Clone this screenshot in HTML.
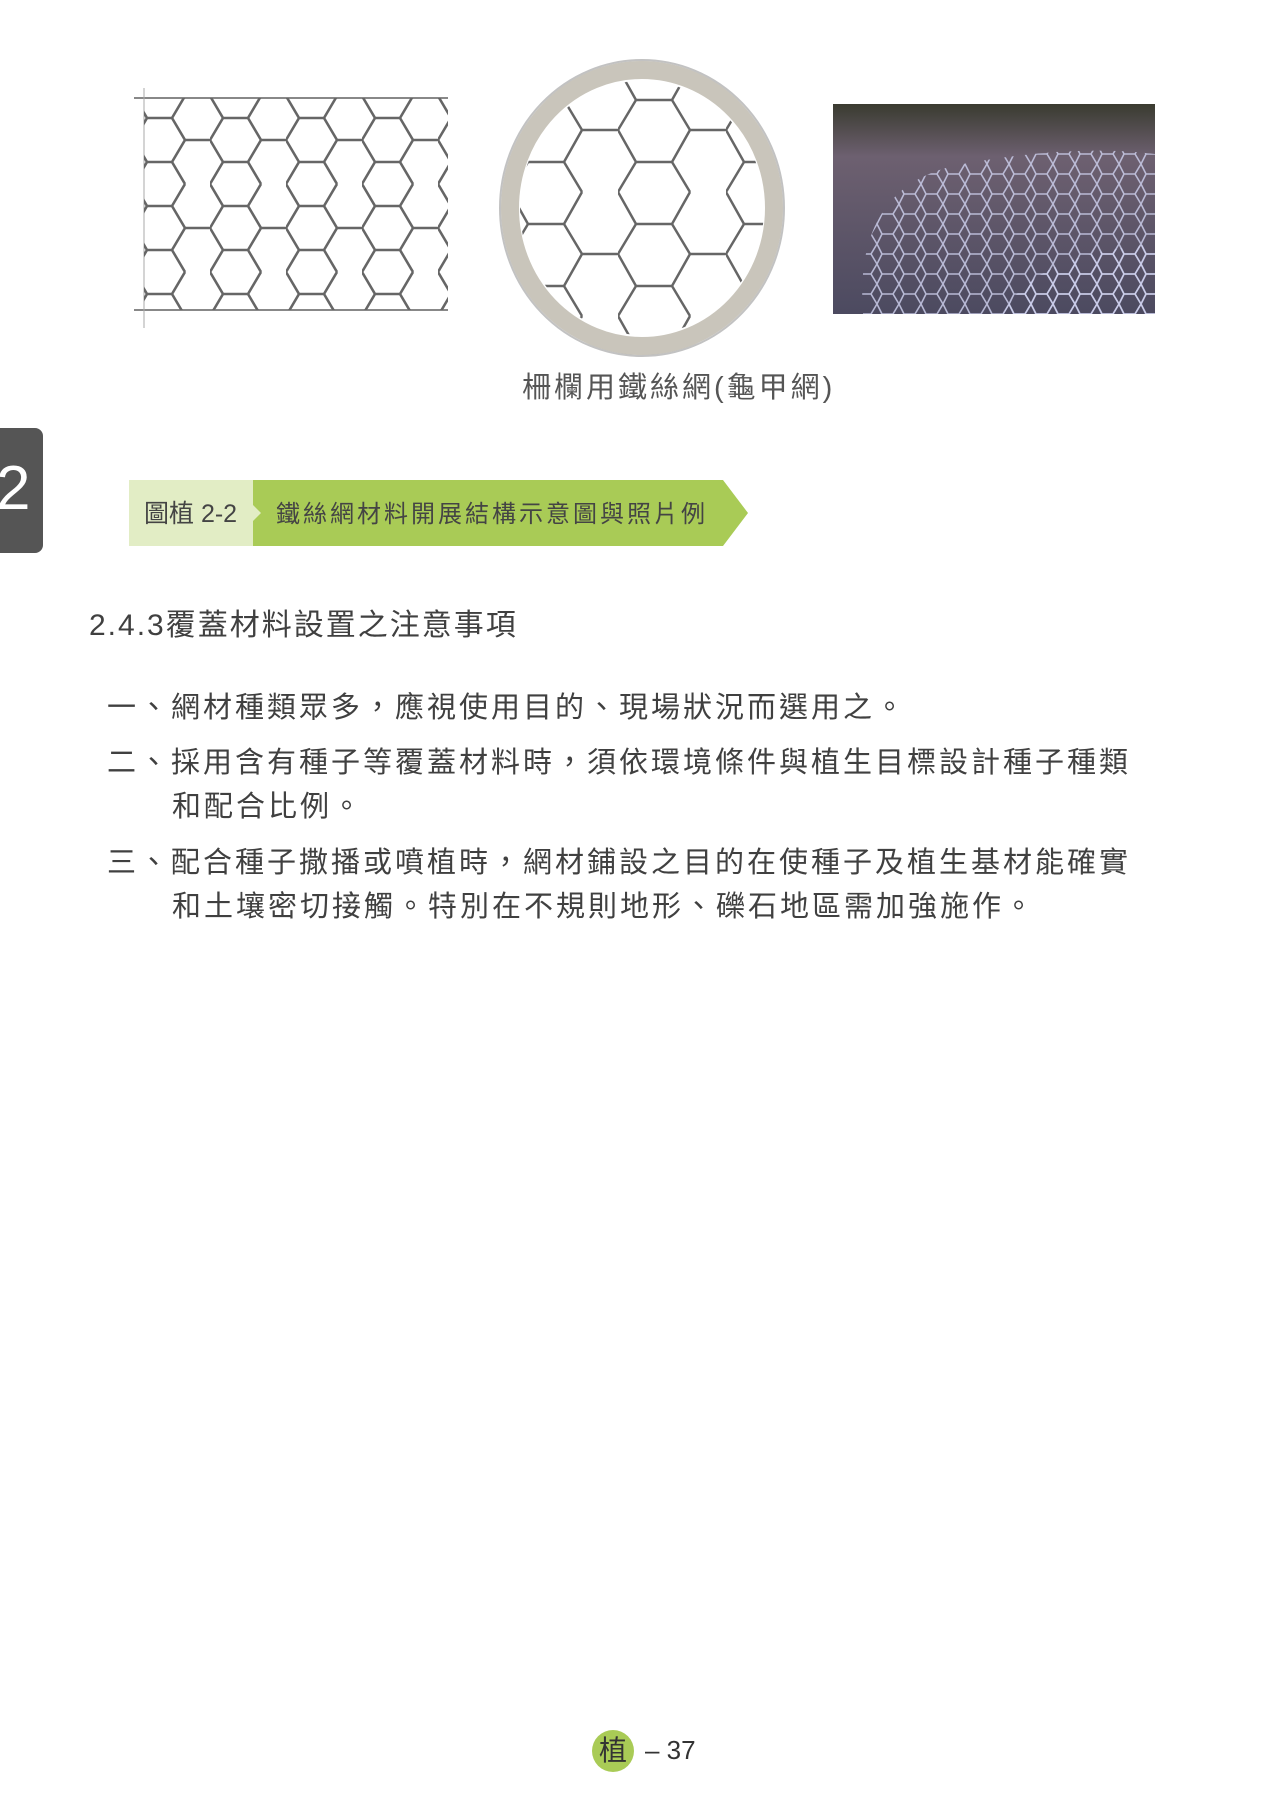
<!DOCTYPE html>
<html><head><meta charset="utf-8"><style>
body{margin:0;width:1272px;height:1800px;background:#fff;position:relative;overflow:hidden;font-family:"Liberation Sans","Noto Sans CJK TC",sans-serif;color:#404040}
.a{position:absolute;white-space:nowrap}
.li{font-size:29px;letter-spacing:3.0px;line-height:44px}
</style></head><body>
<svg class="a" style="left:128px;top:88px" width="322" height="246" viewBox="0 0 322 246">
<defs><pattern id="hx" width="76" height="88" patternUnits="userSpaceOnUse" x="6" y="8">
<path d="M0 0 L13 22 L0 44 M13 22 L38 22 L51 0 M38 22 L51 44 L38 66 L13 66 L0 44 M51 44 L76 44 M38 66 L51 88 M13 66 L0 88 M0 0 L-25 0" fill="none" stroke="#666" stroke-width="2.6"/>
</pattern></defs>
<line x1="6" y1="10" x2="320" y2="10" stroke="#888" stroke-width="2"/>
<line x1="6" y1="222" x2="320" y2="222" stroke="#888" stroke-width="2"/>
<line x1="16" y1="0" x2="16" y2="240" stroke="#aaa" stroke-width="1"/>
<rect x="16" y="10" width="304" height="212" fill="url(#hx)"/>
</svg>
<svg class="a" style="left:490px;top:58px" width="310" height="300" viewBox="0 0 310 300">
<defs><pattern id="hx2" width="108" height="124" patternUnits="userSpaceOnUse" x="20" y="10">
<path d="M0 0 L18 32 L0 62 M18 32 L54 32 L72 0 M54 32 L72 62 L54 94 L18 94 L0 62 M72 62 L108 62 M54 94 L72 124 M18 94 L0 124" fill="none" stroke="#666" stroke-width="2.5"/>
</pattern><clipPath id="c"><ellipse cx="152" cy="150" rx="122" ry="127"/></clipPath></defs>
<ellipse cx="152" cy="150" rx="132" ry="138" fill="none" stroke="#c9c5bb" stroke-width="18"/>
<ellipse cx="152" cy="150" rx="142" ry="148" fill="none" stroke="#999" stroke-width="2" opacity=".6"/>
<rect x="0" y="0" width="310" height="300" fill="url(#hx2)" clip-path="url(#c)"/>
</svg>
<svg class="a" style="left:833px;top:104px" width="322" height="210" viewBox="0 0 322 210">
<defs><linearGradient id="g" x1="0" y1="0" x2="0" y2="1"><stop offset="0" stop-color="#3a3b30"/><stop offset=".25" stop-color="#6d6070"/><stop offset="1" stop-color="#4c4a60"/></linearGradient>
<pattern id="hx3" width="22" height="20" patternUnits="userSpaceOnUse"><path d="M0 0 L5 10 L0 20 M5 10 L16 10 L22 0 M16 10 L22 20" fill="none" stroke="#c9cbe8" stroke-width="1.6"/></pattern></defs>
<rect width="322" height="210" fill="url(#g)"/>
<path d="M30 210 Q20 80 130 60 Q240 40 322 50 L322 210Z" fill="url(#hx3)" opacity=".85"/>
<path d="M170 210 Q200 150 322 140 L322 210Z" fill="url(#hx3)"/>
</svg>
<div class="a" style="left:522px;top:364px;font-size:29px;color:#555;letter-spacing:3px">柵欄用鐵絲網(龜甲網)</div>
<div class="a" style="left:0;top:428px;width:43px;height:125px;background:#555;border-radius:0 8px 8px 0"></div>
<div class="a" style="left:-4px;top:449px;font-size:62px;color:#fff;line-height:80px">2</div>
<div class="a" style="left:129px;top:480px;width:124px;height:66px;background:#e2edc5"></div>
<svg class="a" style="left:253px;top:480px" width="496" height="66"><polygon points="0,0 470,0 495,33 470,66 0,66" fill="#a9cb56"/><polygon points="0,25 8,33 0,41" fill="#e2edc5"/></svg>
<div class="a" style="left:144px;top:494px;font-size:25px;color:#444">圖植 2-2</div>
<div class="a" style="left:276px;top:494px;font-size:24px;color:#444;letter-spacing:3px">鐵絲網材料開展結構示意圖與照片例</div>
<div class="a" style="left:89px;top:600px;font-size:30px;letter-spacing:2px">2.4.3覆蓋材料設置之注意事項</div>
<div class="a li" style="left:107px;top:686px">一、網材種類眾多，應視使用目的、現場狀況而選用之。</div>
<div class="a li" style="left:107px;top:741px">二、採用含有種子等覆蓋材料時，須依環境條件與植生目標設計種子種類</div>
<div class="a li" style="left:172px;top:785px">和配合比例。</div>
<div class="a li" style="left:107px;top:841px">三、配合種子撒播或噴植時，網材鋪設之目的在使種子及植生基材能確實</div>
<div class="a li" style="left:172px;top:885px">和土壤密切接觸。特別在不規則地形、礫石地區需加強施作。</div>
<div class="a" style="left:592px;top:1730px;width:42px;height:42px;border-radius:50%;background:#a9cb56;text-align:center;line-height:42px;font-size:28px;color:#333">植</div>
<div class="a" style="left:645px;top:1735px;font-size:26px;color:#333">– 37</div>
</body></html>
